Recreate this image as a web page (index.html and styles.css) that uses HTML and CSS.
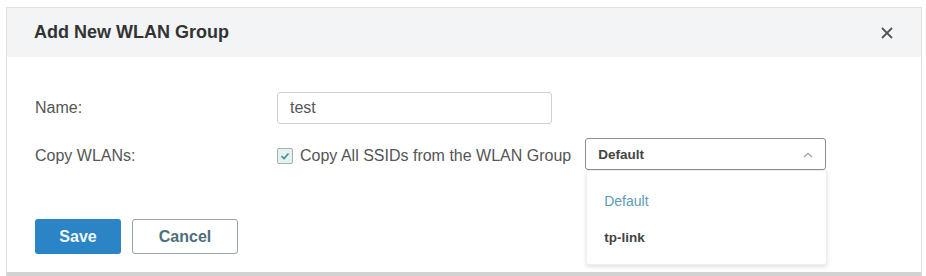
FILE: index.html
```html
<!DOCTYPE html>
<html lang="en">
<head>
	<meta charset="UTF-8">
	<link rel="stylesheet" href="styles.css">
	<title>Add New WLAN Group</title>
</head>
<body>
	<div class="dialog">
		<div class="dialog-head">
			<h2>Add New WLAN Group</h2>
			<span class="close">
				<svg width="12" height="12" viewBox="0 0 12 12"><path d="M1 1L11 11M11 1L1 11" stroke="#555" stroke-width="1.8" fill="none"/></svg>
			</span>
		</div>
		<div class="dialog-body">
			<div class="row">
				<label>Name:</label>
				<input class="text-input" type="text" value="test">
			</div>
			<div class="row">
				<label>Copy WLANs:</label>
				<span class="check">
					<svg width="12" height="12" viewBox="0 0 12 12"><path d="M2.5 6.2L5 8.5L9.5 3.5" stroke="#4d8b8f" stroke-width="1.6" fill="none"/></svg>
				</span>
				<span class="check-text">Copy All SSIDs from the WLAN Group</span>
				<div class="select">
					<span class="value">Default</span>
					<svg class="arrow" width="10" height="6" viewBox="0 0 10 6"><path d="M1 5L5 1.5L9 5" stroke="#aaa" stroke-width="1.6" fill="none"/></svg>
					<ul class="options">
						<li class="selected">Default</li>
						<li>tp-link</li>
					</ul>
				</div>
			</div>
			<div class="buttons">
				<button class="btn save">Save</button>
				<button class="btn cancel">Cancel</button>
			</div>
		</div>
	</div>
</body>
</html>
```

FILE: styles.css
```css
*{
	padding: 0;
	margin: 0;
	box-sizing: border-box;
	font-family: "Liberation Sans", Arial, sans-serif;
}
body{
	background-color: #fff;
	padding: 7px 4px 0 6px;
}
.dialog{
	width: 916px;
	height: 269px;
	border: 1px solid #e2e2e2;
	border-bottom: 4px solid #d2d2d2;
	background-color: #fff;
}
.dialog-head{
	height: 49px;
	display: flex;
	align-items: center;
	justify-content: space-between;
	padding: 0 28px 0 27px;
	background-color: #f2f4f5;
}
.dialog-head h2{
	font-size: 18px;
	font-weight: 700;
	color: #333;
}
.close{
	display: flex;
	margin-top: 1px;
}
.dialog-body{
	padding: 35px 28px 0 28px;
}
.row{
	display: flex;
	align-items: center;
	height: 32px;
	margin-bottom: 14px;
}
.row label{
	width: 242px;
	font-size: 16px;
	color: #555;
}
.row:nth-child(2) label{
	margin-top: 4px;
}
.text-input{
	width: 275px;
	height: 32px;
	border: 1px solid #d0d0d0;
	border-radius: 3px;
	padding: 0 12px;
	font-size: 16px;
	color: #555;
	outline: none;
}
.check{
	width: 16px;
	height: 16px;
	display: flex;
	align-items: center;
	justify-content: center;
	margin-top: 4px;
	border: 1px solid #9fb2b2;
	border-radius: 2px;
	background-color: #e4f2f0;
}
.check-text{
	margin: 4px 0 0 7px;
	font-size: 16px;
	color: #555;
}
.select{
	position: relative;
	width: 241px;
	height: 32px;
	margin-left: 14px;
	display: flex;
	align-items: center;
	justify-content: space-between;
	padding: 0 12px 0 12px;
	border: 1px solid #84918f;
	border-radius: 3px;
}
.select .value{
	font-size: 13.5px;
	font-weight: 700;
	color: #444;
}
.arrow{
	margin-top: 2px;
}
.options{
	position: absolute;
	top: 31px;
	left: 0;
	width: 241px;
	height: 95px;
	list-style: none;
	padding: 18px 0 0 17px;
	background-color: #fff;
	border: 1px solid #eee;
	box-shadow: 0 2px 4px rgba(0, 0, 0, 0.12);
	border-radius: 0 0 3px 3px;
}
.options li{
	height: 37px;
	line-height: 24px;
	font-size: 13.5px;
	font-weight: 700;
	color: #444;
}
.options li.selected{
	font-size: 14px;
	font-weight: 400;
	color: #5b9db5;
}
.buttons{
	display: flex;
	gap: 11px;
	margin-top: 49px;
}
.btn{
	height: 35px;
	border-radius: 3px;
	font-size: 16px;
	font-weight: 700;
	cursor: pointer;
}
.save{
	width: 86px;
	background-color: #2a84c6;
	color: #eef6fb;
	border: none;
}
.cancel{
	width: 106px;
	background-color: #fff;
	color: #4c6f7c;
	border: 1px solid #9aa3a6;
}
```
